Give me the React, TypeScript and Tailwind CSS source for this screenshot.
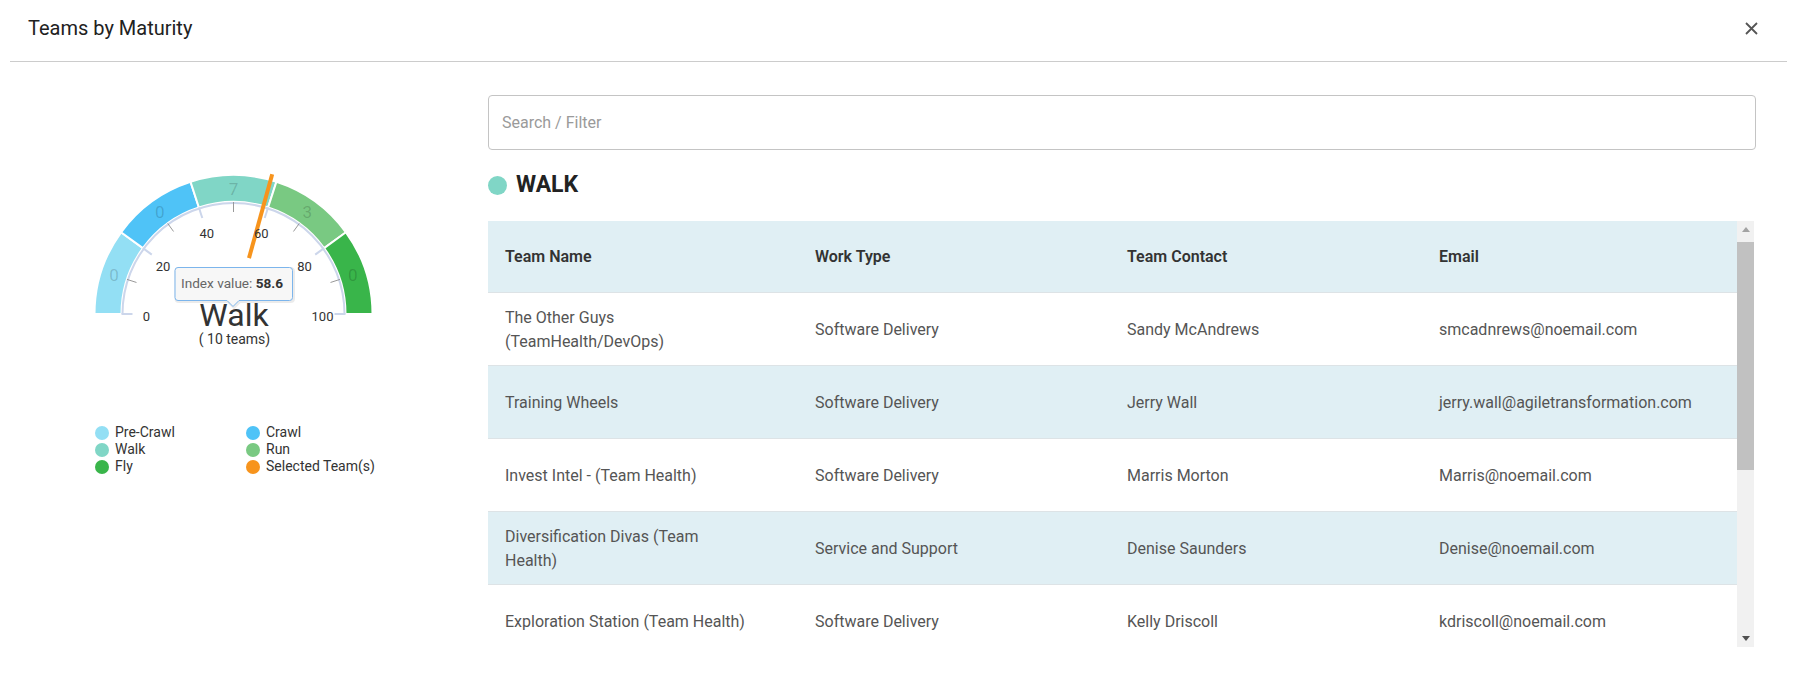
import React from 'react';

// gauge geometry (svg coordinates, svg sits at page 80,160)
const CX = 153.5;
const CY = 154;
const R_OUT = 139;
const R_IN = 112;

const pt = (value: number, r: number): [number, number] => {
  const a = Math.PI * (1 - value / 100);
  return [CX + r * Math.cos(a), CY - r * Math.sin(a)];
};

const bandPath = (from: number, to: number) => {
  const [x1, y1] = pt(from, R_OUT);
  const [x2, y2] = pt(to, R_OUT);
  const [x3, y3] = pt(to, R_IN);
  const [x4, y4] = pt(from, R_IN);
  return `M${x1} ${y1} A${R_OUT} ${R_OUT} 0 0 1 ${x2} ${y2} L${x3} ${y3} A${R_IN} ${R_IN} 0 0 0 ${x4} ${y4} Z`;
};

const BANDS = [
  { from: 0, to: 20, color: '#93dff4', count: '0' },
  { from: 20, to: 40, color: '#4fc3f7', count: '0' },
  { from: 40, to: 60, color: '#80d6c6', count: '7' },
  { from: 60, to: 80, color: '#79c982', count: '3' },
  { from: 80, to: 100, color: '#39b54a', count: '0' },
];

const AXIS_LABELS = [
  { t: '0', x: 66.5, y: 156 },
  { t: '20', x: 83, y: 106 },
  { t: '40', x: 126.7, y: 73.5 },
  { t: '60', x: 181.3, y: 73.5 },
  { t: '80', x: 224.5, y: 106 },
  { t: '100', x: 242.5, y: 156 },
];

const LEGEND = [
  { label: 'Pre-Crawl', color: '#93dff4' },
  { label: 'Crawl', color: '#4fc3f7' },
  { label: 'Walk', color: '#80d6c6' },
  { label: 'Run', color: '#79c982' },
  { label: 'Fly', color: '#39b54a' },
  { label: 'Selected Team(s)', color: '#f7941d' },
];

const TEAMS = [
  { name: 'The Other Guys (TeamHealth/DevOps)', work: 'Software Delivery', contact: 'Sandy McAndrews', email: 'smcadnrews@noemail.com' },
  { name: 'Training Wheels', work: 'Software Delivery', contact: 'Jerry Wall', email: 'jerry.wall@agiletransformation.com' },
  { name: 'Invest Intel - (Team Health)', work: 'Software Delivery', contact: 'Marris Morton', email: 'Marris@noemail.com' },
  { name: 'Diversification Divas (Team Health)', work: 'Service and Support', contact: 'Denise Saunders', email: 'Denise@noemail.com' },
  { name: 'Exploration Station (Team Health)', work: 'Software Delivery', contact: 'Kelly Driscoll', email: 'kdriscoll@noemail.com' },
];

const TOOLTIP_D =
  'M98 107.5 L209.5 107.5 Q212.5 107.5 212.5 110.5 L212.5 137.5 Q212.5 140.5 209.5 140.5 L159 140.5 L153 146.5 L147 140.5 L98 140.5 Q95 140.5 95 137.5 L95 110.5 Q95 107.5 98 107.5 Z';

const Gauge: React.FC = () => {
  const needleValue = 58.6;
  const [nx1, ny1] = pt(needleValue, 58);
  const [nx2, ny2] = pt(needleValue, 145);
  const [ax1, ay1] = pt(0, R_IN - 1);
  const [ax2, ay2] = pt(100, R_IN - 1);

  return (
    <svg width="310" height="192" viewBox="0 0 310 192" className="block">
      {/* plot bands */}
      {BANDS.map((b) => (
        <path key={b.from} d={bandPath(b.from, b.to)} fill={b.color} stroke="#ffffff" strokeWidth="2" />
      ))}
      {/* team counts per band */}
      {BANDS.map((b) => {
        const [x, y] = pt((b.from + b.to) / 2, 125.5);
        return (
          <text key={'c' + b.from} x={x} y={y + 6} textAnchor="middle" fontSize="17" fill="rgba(0,0,0,0.17)">
            {b.count}
          </text>
        );
      })}
      {/* axis line */}
      <path d={`M${ax1} ${ay1} A${R_IN - 1} ${R_IN - 1} 0 0 1 ${ax2} ${ay2}`} fill="none" stroke="#ccd6eb" strokeWidth="2" />
      {/* ticks */}
      {[10, 30, 50, 70, 90].map((v) => {
        const [x1, y1] = pt(v, 112);
        const [x2, y2] = pt(v, 102);
        return <line key={'m' + v} x1={x1} y1={y1} x2={x2} y2={y2} stroke="#999999" strokeWidth="1" />;
      })}
      {[0, 20, 40, 60, 80, 100].map((v) => {
        const [x1, y1] = pt(v, 112);
        const [x2, y2] = pt(v, 101);
        return <line key={'M' + v} x1={x1} y1={y1} x2={x2} y2={y2} stroke="#ccd6eb" strokeWidth="2" />;
      })}
      {/* needle */}
      <line x1={nx1} y1={ny1} x2={nx2} y2={ny2} stroke="#f7941d" strokeWidth="4" />
      {AXIS_LABELS.map((l) => (
        <text key={l.t} x={l.x} y={l.y + 4.5} textAnchor="middle" fontSize="13" fill="#333333">
          {l.t}
        </text>
      ))}
      <text x="154" y="165.5" textAnchor="middle" fontSize="32" fill="#333333">
        Walk
      </text>
      <text x="154.5" y="184" textAnchor="middle" fontSize="14" fill="#333333">
        ( 10 teams)
      </text>
      {/* tooltip */}
      <path d={TOOLTIP_D} fill="none" stroke="rgba(0,0,0,0.08)" strokeWidth="3" transform="translate(1 1)" />
      <path d={TOOLTIP_D} fill="rgba(247,247,247,0.97)" stroke="#7cb5ec" strokeWidth="1" />
      <text x="101" y="127.5" fontSize="13.6" fill="#666666">
        Index value: <tspan fontWeight="700" fill="#333333">58.6</tspan>
      </text>
    </svg>
  );
};

const Scrollbar: React.FC = () => (
  <div className="flex h-[426px] w-[17px] flex-col bg-[#f1f1f1]">
    <div className="flex h-[17px] items-center justify-center">
      <svg width="8" height="5" viewBox="0 0 8 5">
        <polygon points="0,5 8,5 4,0" fill="#a3a3a3" />
      </svg>
    </div>
    <div className="mt-[4px] h-[228px] bg-[#c1c1c1]" />
    <div className="flex-1" />
    <div className="flex h-[17px] items-center justify-center">
      <svg width="8" height="5" viewBox="0 0 8 5">
        <polygon points="0,0 8,0 4,5" fill="#505050" />
      </svg>
    </div>
  </div>
);

export default function App() {
  return (
    <div className="h-[680px] w-[1798px] overflow-hidden bg-white font-['Roboto',sans-serif] text-[#333333]">
      {/* header */}
      <div className="ml-[10px] mr-[11px] flex h-[62px] items-start justify-between border-b border-[#cccccc] pl-[18px] pr-[29px]">
        <h1 className="pt-[16px] text-[20px] leading-[24px] font-normal text-[#212121]">Teams by Maturity</h1>
        <button className="mt-[21px] flex h-[14px] w-[14px] items-center justify-center">
          <svg width="13" height="13" viewBox="0 0 13 13">
            <path d="M1 1 L12 12 M12 1 L1 12" stroke="#555555" strokeWidth="1.8" />
          </svg>
        </button>
      </div>

      <div className="flex">
        {/* left: gauge + legend */}
        <div className="w-[488px] shrink-0">
          <div className="ml-[80px] mt-[98px]">
            <Gauge />
          </div>
          <div className="ml-[95px] mt-[72px] grid grid-cols-[151px_auto] text-[14px] leading-[17px] text-[#333333]">
            {LEGEND.map((l) => (
              <div key={l.label} className="flex items-center gap-[6px] whitespace-nowrap">
                <span className="h-[14px] w-[14px] shrink-0 rounded-full" style={{ backgroundColor: l.color }} />
                <span>{l.label}</span>
              </div>
            ))}
          </div>
        </div>

        {/* right: search + table */}
        <div className="w-[1268px] pt-[33px]">
          <div className="flex h-[55px] items-center rounded-[4px] border border-[#c4c4c4] px-[13px] text-[16px] text-[#9a9a9a]">
            Search / Filter
          </div>

          <div className="mt-[23px] flex h-[24px] items-center gap-[9px]">
            <span className="h-[19px] w-[19px] rounded-full bg-[#80d6c6]" />
            <span className="text-[23px] font-bold leading-[24px] text-[#222222]">WALK</span>
          </div>

          <div className="mt-[24px] flex w-[1266px]">
            <div className="h-[426px] w-[1249px] overflow-hidden">
              <div className="grid h-[72px] grid-cols-[310px_312px_312px_auto] items-center border-b border-[#dde3e6] bg-[#e0eff4] text-[16px] font-semibold text-[#333333]">
                <div className="pl-[17px]">Team Name</div>
                <div className="pl-[17px]">Work Type</div>
                <div className="pl-[17px]">Team Contact</div>
                <div className="pl-[17px]">Email</div>
              </div>
              {TEAMS.map((t, i) => (
                <div
                  key={t.name}
                  className={
                    'grid h-[73px] grid-cols-[310px_312px_312px_auto] items-center border-b border-[#dde3e6] pt-[1px] text-[16px] leading-[24px] text-[#555555] ' +
                    (i % 2 === 1 ? 'bg-[#e0eff4]' : 'bg-white')
                  }
                >
                  <div className="pl-[17px]">
                    <div className="max-w-[246px]">{t.name}</div>
                  </div>
                  <div className="pl-[17px]">{t.work}</div>
                  <div className="pl-[17px]">{t.contact}</div>
                  <div className="pl-[17px] whitespace-nowrap">{t.email}</div>
                </div>
              ))}
            </div>
            <Scrollbar />
          </div>
        </div>
      </div>
    </div>
  );
}
